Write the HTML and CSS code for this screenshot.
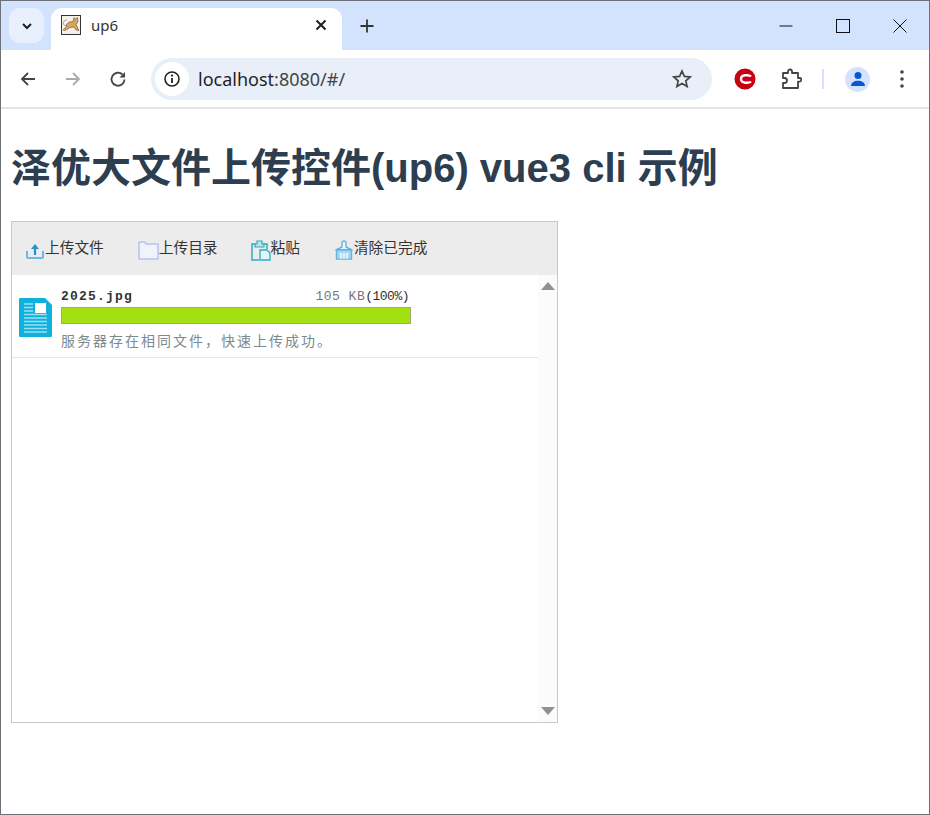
FILE: index.html
```html
<!DOCTYPE html>
<html lang="zh">
<head>
<meta charset="utf-8">
<title>up6</title>
<link rel="stylesheet" href="styles.css">
</head>
<body>
<div class="window">
  <header class="tabstrip">
    <button class="tabsearch"><svg width="14" height="14" viewBox="0 0 14 14"><path d="M3 5l4 4 4-4" fill="none" stroke="#1f1f1f" stroke-width="2"/></svg></button>
    <div class="tab">
      <svg class="favicon" width="20" height="20" viewBox="0 0 20 20"><rect x=".5" y=".5" width="19" height="19" fill="#f4f1ea" stroke="#333"/><path d="M5 10l3-3 4-.5 1-4 1.500 1.500 2-1.500.5 4-2 3 3 6-3-.5-2-3-4 .5-5 3-2-.5 4-4z" fill="#d8a45c" stroke="#6a4c2a" stroke-width=".6"/><path d="M5 11C1 10 2 5 6 5" fill="none" stroke="#999"/></svg>
      <span class="tabtitle">up6</span>
      <svg class="tabclose" width="12" height="12" viewBox="0 0 12 12"><path d="M1.500 1.500l9 9M10.500 1.500l-9 9" stroke="#1f1f1f" stroke-width="2"/></svg>
    </div>
    <svg class="newtab" width="14" height="14" viewBox="0 0 14 14"><path d="M7 .5v13M.5 7h13" stroke="#333" stroke-width="1.800"/></svg>
    <div class="winctrls">
      <svg width="14" height="14" viewBox="0 0 14 14"><path d="M.5 7h13" stroke="#111" stroke-width="1"/></svg>
      <svg width="14" height="14" viewBox="0 0 14 14"><rect x=".5" y=".5" width="13" height="13" fill="none" stroke="#111"/></svg>
      <svg width="14" height="14" viewBox="0 0 14 14"><path d="M.5.500l13 13M13.500.500l-13 13" stroke="#111" stroke-width="1"/></svg>
    </div>
  </header>
  <nav class="toolbar">
    <svg class="navicon" width="18" height="18" viewBox="0 0 18 18"><path d="M16 9H3M9 3L3 9l6 6" fill="none" stroke="#444" stroke-width="1.800"/></svg>
    <svg class="navicon" width="18" height="18" viewBox="0 0 18 18"><path d="M2 9h13M9 3l6 6-6 6" fill="none" stroke="#aaa" stroke-width="1.800"/></svg>
    <svg class="navicon" width="18" height="18" viewBox="0 0 18 18"><path d="M15.500 9.500A6.500 6.500 0 1 1 13.500 4.500" fill="none" stroke="#444" stroke-width="1.800"/><path d="M16 2v5.500h-5.500z" fill="#444"/></svg>
    <div class="omnibox">
      <span class="infochip"><svg width="18" height="18" viewBox="0 0 18 18"><circle cx="9" cy="9" r="7" fill="none" stroke="#222" stroke-width="1.600"/><path d="M9 8v5" stroke="#222" stroke-width="1.800"/><circle cx="9" cy="5.600" r="1.100" fill="#222"/></svg></span>
      <span class="url">localhost<span class="urlrest">:8080/#/</span></span>
      <svg class="star" width="20" height="20" viewBox="0 0 20 20"><path d="M10 2l2.400 5.400 5.800.6-4.400 3.900 1.300 5.700-5.100-3-5.100 3 1.300-5.700L1.800 8l5.800-.6z" fill="none" stroke="#444" stroke-width="1.700"/></svg>
    </div>
    <div class="extensions">
      <svg class="ext-c" width="22" height="22" viewBox="0 0 22 22"><circle cx="11" cy="11" r="10.500" fill="#c9000f"/><path d="M17 8.500C15 6.500 7 6.500 7 11s8 4.500 10 2.500" fill="none" stroke="#fff" stroke-width="2.400"/></svg>
      <svg class="ext-p" width="22" height="22" viewBox="0 0 22 22"><path d="M3 5h5V3.500a2 2 0 0 1 4 0V5h6v5h1.500a1.800 1.800 0 0 1 0 3.600H18V20H3v-5h1.500a2.500 2.500 0 0 0 0-5H3z" fill="none" stroke="#444" stroke-width="1.800" stroke-linejoin="round"/></svg>
      <span class="sep"></span>
      <span class="avatar"><svg width="16" height="16" viewBox="0 0 16 16"><circle cx="8" cy="4.500" r="3.500" fill="#0b57d0"/><path d="M1 15c0-7 14-7 14 0z" fill="#0b57d0"/></svg></span>
      <svg class="dots" width="4" height="18" viewBox="0 0 4 18"><circle cx="2" cy="2" r="1.800" fill="#444"/><circle cx="2" cy="9" r="1.800" fill="#444"/><circle cx="2" cy="16" r="1.800" fill="#444"/></svg>
    </div>
  </nav>
  <main class="page">
    <h1 class="title">泽优大文件上传控件(up6) vue3 cli 示例</h1>
    <section class="panel">
      <div class="actions">
        <button class="action action-file"><svg width="20" height="20" viewBox="0 0 20 20"><path d="M2 11v6a1 1 0 0 0 1 1h14a1 1 0 0 0 1-1v-6" fill="none" stroke="#6bb9e4" stroke-width="2"/><path d="M10 8v7" stroke="#2a90c8" stroke-width="2.200"/><path d="M6 9l4-5 4 5z" fill="#2a90c8"/></svg><span class="label">上传文件</span></button>
        <button class="action action-dir"><svg width="21" height="20" viewBox="0 0 21 20"><path d="M1 2h6l1 2h12v15H1z" fill="#f0f3fc" stroke="#b4c4f0" stroke-width="1.500"/></svg><span class="label">上传目录</span></button>
        <button class="action action-paste"><svg width="20" height="21" viewBox="0 0 20 21"><path d="M5 4H1v16h7" fill="none" stroke="#33a9bb" stroke-width="1.500"/><path d="M12 4h4v5" fill="none" stroke="#33a9bb" stroke-width="1.500"/><path d="M4 7V4h2V1h5v3h2v3z" fill="#bfe6ec" stroke="#33a9bb" stroke-width="1.200"/><path d="M9 10h7l3 3v7H9z" fill="#e4f5f7" stroke="#33a9bb" stroke-width="1.300"/></svg><span class="label">粘贴</span></button>
        <button class="action action-clear"><svg width="20" height="20" viewBox="0 0 20 20"><path d="M8 7V3a2 2 0 0 1 4 0v4l6 3H2z" fill="#eef7fd" stroke="#62b5e4" stroke-width="1.400" stroke-linejoin="round"/><path d="M2.500 10h15v9h-15z" fill="#a9d7f2" stroke="#62b5e4" stroke-width="1.400"/><path d="M7 13v6M10 13v6M13 13v6" stroke="#fff" stroke-width="1.400"/></svg><span class="label">清除已完成</span></button>
      </div>
      <div class="listwrap">
        <div class="list">
          <div class="item">
            <svg class="fileicon" width="33" height="39" viewBox="0 0 33 39"><path d="M1 0h25l7 7v31a1 1 0 0 1-1 1H1a1 1 0 0 1-1-1V1a1 1 0 0 1 1-1z" fill="#0fb0dc"/><path d="M16 5h11v10H16z" fill="#fff"/><path d="M5 6h9M5 9.500h9M5 13h9M5 16.500h23M5 20h23M5 23.500h23M5 27h23M5 30.500h23M5 34h23" stroke="#9be0f2" stroke-width="1.500"/></svg>
            <div class="itembody">
              <div class="itemhead"><span class="filename">2025.jpg</span><span class="filesize">105 KB<span class="percent">(100%)</span></span></div>
              <div class="progress"><div class="progressfill" style="width:100%"></div></div>
              <div class="message">服务器存在相同文件，快速上传成功。</div>
            </div>
          </div>
        </div>
        <div class="scrollbar">
          <span class="arrow-up"></span>
          <span class="arrow-down"></span>
        </div>
      </div>
    </section>
  </main>
</div>
</body>
</html>
```
FILE: styles.css
```css
* { box-sizing: border-box; }
html, body { margin: 0; height: 100%; }
body { font-family: "Liberation Sans", "Noto Sans CJK SC", sans-serif; background: #fff; overflow: hidden; }
.window { height: 815px; border: 1px solid #6d7178; display: flex; flex-direction: column; }

.tabstrip { height: 49px; background: #d3e3fd; display: flex; align-items: flex-start; padding: 7px 0 0 8px; flex: none; }
.tabsearch { width: 35px; height: 35px; border: 0; padding: 0; border-radius: 11px; background: #e9f0fd; display: flex; align-items: center; justify-content: center; }
.tab { width: 291px; height: 42px; margin-left: 7px; background: #fff; border-radius: 11px 11px 0 0; display: flex; align-items: center; padding: 0 15px 8px 10px; }
.favicon { flex: none; }
.tabtitle { margin-left: 10px; font: 15px "Noto Sans", sans-serif; color: #333; flex: 1; }
.newtab { margin: 11px 0 0 18px; }
.winctrls { margin-left: auto; display: flex; gap: 43px; padding: 11px 22px 0 0; }

.toolbar { height: 59px; background: #fff; border-bottom: 2px solid #e3e3e3; border-radius: 9px 9px 0 0; display: flex; align-items: center; padding: 1px 18px 0; flex: none; }
.navicon { margin-right: 27px; flex: none; }
.omnibox { width: 561px; height: 42px; margin-left: -3px; background: #e9eff9; border-radius: 21px; display: flex; align-items: center; padding: 0 20px 0 4px; }
.infochip { width: 34px; height: 34px; background: #fff; border-radius: 50%; display: flex; align-items: center; justify-content: center; }
.url { margin-left: 9px; font: 18px "Noto Sans", sans-serif; color: #1f1f1f; flex: 1; }
.urlrest { color: #444; }
.extensions { display: flex; align-items: center; margin-left: 22px; }
.ext-p { margin-left: 24px; }
.sep { width: 2px; height: 20px; background: #d3e3fd; margin-left: 20px; }
.avatar { width: 25px; height: 25px; margin-left: 21px; background: #d3e3fd; border-radius: 50%; display: flex; align-items: center; justify-content: center; }
.dots { margin-left: 30px; }

.page { flex: 1; padding: 0 10px; background: #fff; }
.title { margin: 37px 0 0; font-size: 40px; line-height: 44px; font-weight: 700; color: #2c3e50; }
.panel { width: 547px; height: 502px; margin-top: 31px; border: 1px solid #c8c8c8; display: flex; flex-direction: column; }
.actions { height: 53px; background: #ececec; display: flex; align-items: center; padding-left: 13px; flex: none; }
.action { border: 0; padding: 0; background: none; display: flex; align-items: center; font: 14.700px "Noto Sans CJK SC", sans-serif; color: #333; }
.action svg { flex: none; margin-top: 3px; }
.label { margin-bottom: 4px; }
.action-dir { margin-left: 34px; }
.action-paste { margin-left: 33px; }
.action-clear { margin-left: 34px; }

.listwrap { flex: 1; display: flex; min-height: 0; }
.list { flex: 1; }
.item { height: 83px; border-bottom: 1px solid #e6e6e6; display: flex; padding: 23px 0 0 7px; }
.fileicon { flex: none; }
.itembody { width: 350px; margin: -11px 0 0 9px; }
.itemhead { display: flex; justify-content: space-between; height: 19px; align-items: center; padding-right: 2px; }
.filename { font: bold 13px "Liberation Mono", monospace; letter-spacing: 1.200px; color: #333; }
.filesize { font: 13px "Liberation Mono", monospace; letter-spacing: .500px; color: #777; }
.percent { color: #333; letter-spacing: -.500px; }
.progress { height: 17px; margin-top: 1px; border: 1px solid #9fae6f; background: #eee; }
.progressfill { height: 100%; background: #a3e012; }
.message { margin-top: 6px; font: 14px "Noto Sans CJK SC", sans-serif; letter-spacing: 2px; color: #7a8a90; line-height: 20px; }

.scrollbar { width: 19px; background: #fbfbfb; display: flex; flex-direction: column; justify-content: space-between; align-items: center; padding: 7px 0 7px; flex: none; }
.arrow-up { width: 0; height: 0; border: 7px solid transparent; border-top: 0; border-bottom: 8px solid #909090; }
.arrow-down { width: 0; height: 0; border: 7px solid transparent; border-bottom: 0; border-top: 8px solid #909090; }
```
